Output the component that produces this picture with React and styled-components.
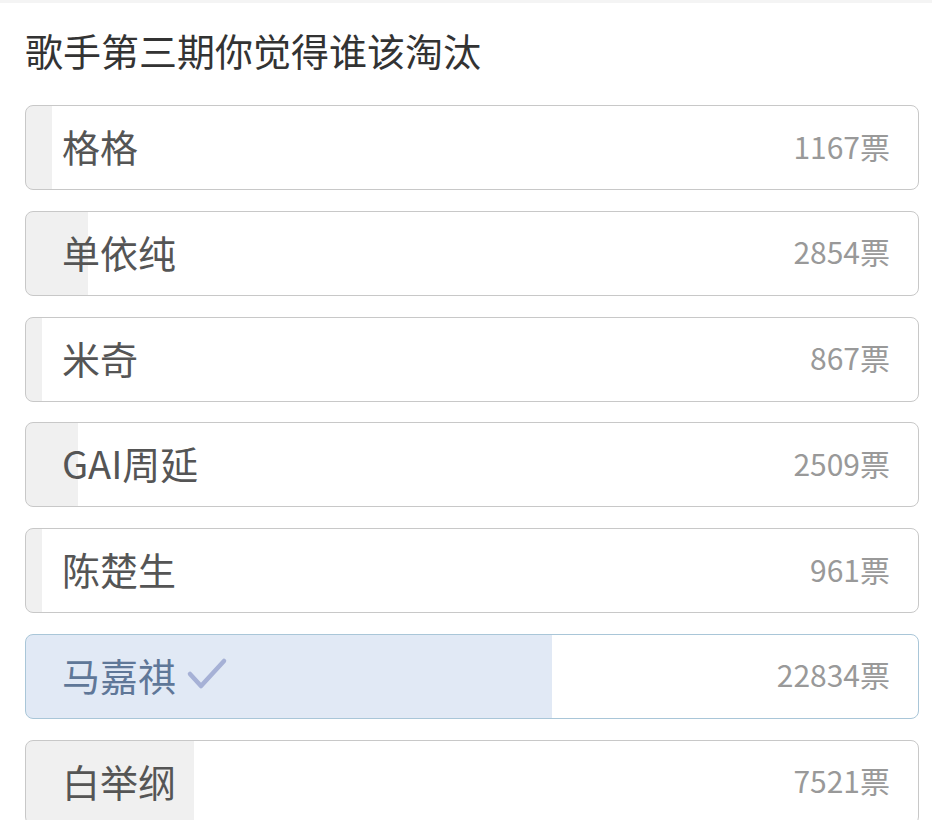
import React from "react";
import styled, { createGlobalStyle } from "styled-components";

const Global = createGlobalStyle`
  html, body { margin: 0; padding: 0; background: #fff; }
  body { font-family: "Noto Sans CJK SC", "Noto Sans", sans-serif; }
`;

const Page = styled.div`
  border-top: 3px solid #f4f4f4;
  padding: 25px 13px 0 25px;
`;

const Title = styled.h1`
  margin: 0 0 33px;
  font-size: 38px;
  line-height: 44px;
  font-weight: 400;
  color: #333;
`;

const List = styled.div`
  display: flex;
  flex-direction: column;
  gap: 20.8px;
`;

const Option = styled.div`
  box-sizing: border-box;
  height: 85px;
  display: flex;
  align-items: center;
  justify-content: space-between;
  padding: 0 28px 4px 36px;
  border: 1.5px solid ${(p) => (p.$selected ? "#a9c6d8" : "#c8c8c8")};
  border-radius: 8px;
  background-color: #fff;
  background-repeat: no-repeat;
`;

const Name = styled.span`
  display: flex;
  align-items: center;
  gap: 10px;
  font-size: 38px;
  color: ${(p) => (p.$selected ? "#5f7798" : "#555")};
`;

const Votes = styled.span`
  font-size: 30px;
  color: #999;
`;

const Check = () => (
  <svg width="42" height="34" viewBox="0 0 42 34">
    <path d="M4 17 L15 29 L38 4" fill="none" stroke="#a6b1d6" strokeWidth="4.5" strokeLinecap="round" strokeLinejoin="round" />
  </svg>
);

const data = [
  { name: "格格", votes: 1167, pct: 2.9 },
  { name: "单依纯", votes: 2854, pct: 6.9 },
  { name: "米奇", votes: 867, pct: 1.8 },
  { name: "GAI周延", votes: 2509, pct: 5.8 },
  { name: "陈楚生", votes: 961, pct: 1.8 },
  { name: "马嘉祺", votes: 22834, pct: 59, selected: true },
  { name: "白举纲", votes: 7521, pct: 18.8 },
];

export default function App() {
  return (
    <>
      <Global />
      <Page>
        <Title>歌手第三期你觉得谁该淘汰</Title>
        <List>
          {data.map((d) => {
            const fill = d.selected ? "#e1e9f5" : "#f0f0f0";
            return (
              <Option
                key={d.name}
                $selected={d.selected}
                style={{
                  backgroundImage: `linear-gradient(to right, ${fill} 0, ${fill} ${d.pct}%, #fff ${d.pct}%)`,
                }}
              >
                <Name $selected={d.selected}>
                  {d.name}
                  {d.selected && <Check />}
                </Name>
                <Votes>{d.votes}票</Votes>
              </Option>
            );
          })}
        </List>
      </Page>
    </>
  );
}
